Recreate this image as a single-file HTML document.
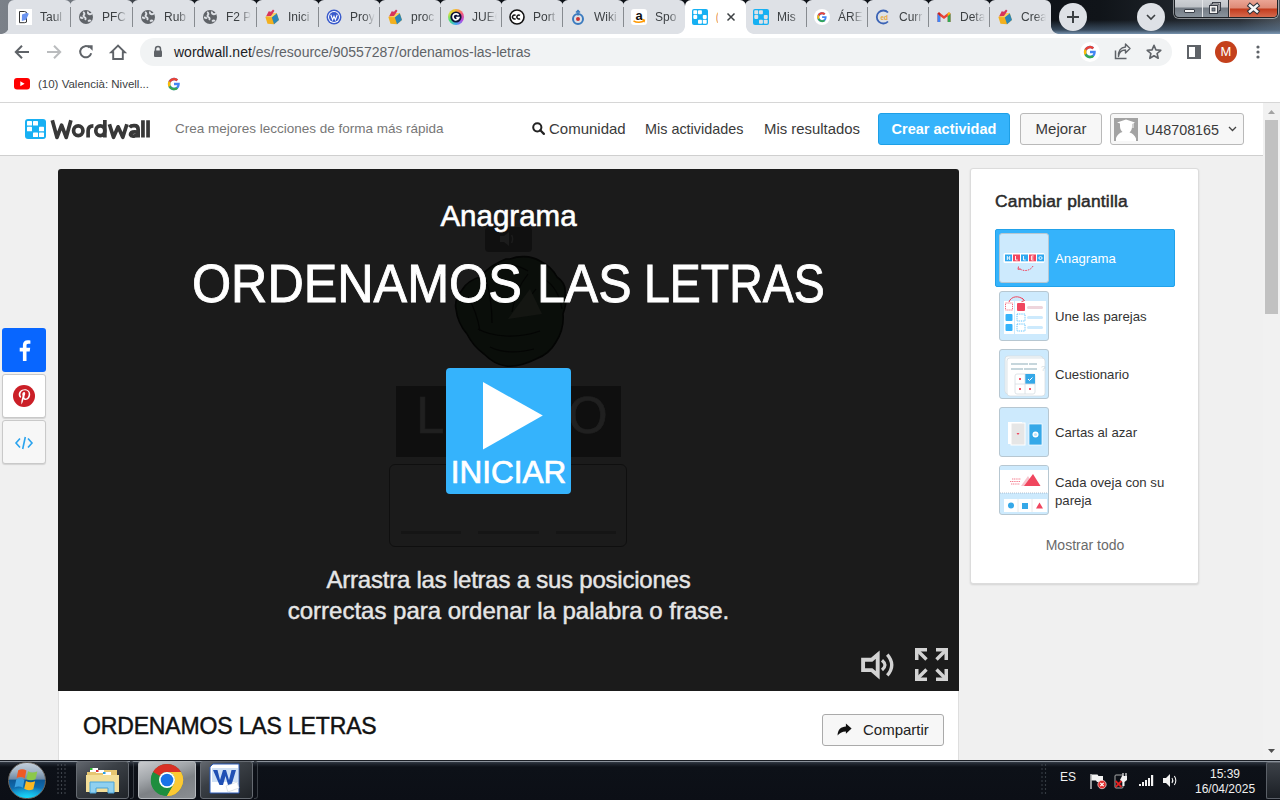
<!DOCTYPE html>
<html><head><meta charset="utf-8">
<style>
*{margin:0;padding:0;box-sizing:border-box}
html,body{width:1280px;height:800px;overflow:hidden;background:#f0f0f0;font-family:"Liberation Sans",sans-serif}
.a{position:absolute}
svg{position:absolute;overflow:visible}
.tab{position:absolute;top:0;height:34px;background:#dee1e6;border-radius:6px 6px 0 0}
.sep{position:absolute;top:7px;width:1px;height:20px;background:#878b90}
.ttl{position:absolute;top:9px;font-size:12px;line-height:16px;color:#3c4043;white-space:nowrap;overflow:hidden;width:25px;-webkit-mask-image:linear-gradient(90deg,#000 55%,transparent 100%)}
.fav{position:absolute;top:9px;width:16px;height:16px}
.nav{position:absolute;top:122px;font-size:14.6px;line-height:15px;color:#3a3a3a;white-space:nowrap}
.thumb{position:absolute;left:999px;width:50px;height:50px;background:#cdeafd;border:1px solid #b7c7d1;border-radius:3px;overflow:hidden}
.tlabel{position:absolute;left:1055px;font-size:13.2px;line-height:18px;color:#333}
.sh{position:absolute;left:2px;width:44px;height:44px;border-radius:3px}
</style></head><body>
<div class="a" style="left:0;top:0;width:1280px;height:34px;background:linear-gradient(90deg,#7b8189 0px,#70767e 70px,#40454c 132px,#15191f 194px,#0d1117 260px,#0d1117 1000px,#101419 1100px,#2a3037 1240px,#4a525b 1280px)"></div>
<div class="a" style="left:1050px;top:0;width:230px;height:34px;background:linear-gradient(180deg,rgba(0,0,0,0) 0px,rgba(0,0,0,0) 20px,rgba(90,120,150,.55) 30px,rgba(130,160,190,.9) 34px)"></div>
<div class="a" style="left:0.5px;top:26px;width:8px;height:8px;background:#dee1e6;-webkit-mask-image:radial-gradient(circle at 0 0,transparent 7.5px,#000 8.2px)"></div>
<div class="a" style="left:1050.50px;top:26px;width:8px;height:8px;background:#dee1e6;-webkit-mask-image:radial-gradient(circle at 100% 0,transparent 7.5px,#000 8.2px)"></div>
<div class="tab" style="left:8.00px;width:63.00px"></div>
<div class="tab" style="left:70.00px;width:63.00px"></div>
<div class="tab" style="left:132.00px;width:63.00px"></div>
<div class="tab" style="left:194.00px;width:63.00px"></div>
<div class="tab" style="left:256.00px;width:63.00px"></div>
<div class="tab" style="left:318.00px;width:62.00px"></div>
<div class="tab" style="left:379.00px;width:62.00px"></div>
<div class="tab" style="left:440.00px;width:62.00px"></div>
<div class="tab" style="left:501.00px;width:62.00px"></div>
<div class="tab" style="left:562.00px;width:62.00px"></div>
<div class="tab" style="left:623.00px;width:62.00px"></div>
<div class="tab" style="left:745.00px;width:62.00px"></div>
<div class="tab" style="left:806.00px;width:62.00px"></div>
<div class="tab" style="left:867.00px;width:62.00px"></div>
<div class="tab" style="left:928.00px;width:62.00px"></div>
<div class="tab" style="left:989.00px;width:62.00px"></div>
<div class="a" style="left:676.50px;top:26px;width:8px;height:8px;background:#fff;-webkit-mask-image:radial-gradient(circle at 0 0,transparent 7.5px,#000 8.2px)"></div>
<div class="a" style="left:745.50px;top:26px;width:8px;height:8px;background:#fff;-webkit-mask-image:radial-gradient(circle at 100% 0,transparent 7.5px,#000 8.2px)"></div>
<div class="tab" style="left:684.50px;width:61.00px;background:#fff"></div>
<div class="sep" style="left:70.00px"></div>
<div class="sep" style="left:132.00px"></div>
<div class="sep" style="left:194.00px"></div>
<div class="sep" style="left:256.00px"></div>
<div class="sep" style="left:318.00px"></div>
<div class="sep" style="left:379.00px"></div>
<div class="sep" style="left:440.00px"></div>
<div class="sep" style="left:501.00px"></div>
<div class="sep" style="left:562.00px"></div>
<div class="sep" style="left:623.00px"></div>
<div class="sep" style="left:806.00px"></div>
<div class="sep" style="left:867.00px"></div>
<div class="sep" style="left:928.00px"></div>
<div class="sep" style="left:989.00px"></div>
<div class="a" style="left:448.0px;top:9px;width:16px;height:16px;border-radius:8px;background:conic-gradient(#f7b731,#f5577c,#b44ce0,#3fa9f5,#48e07a,#d8e040,#f7b731)"></div>
<svg class="fav" style="left:16.0px;top:9px" width="16" height="16" viewBox="0 0 16 16"><rect x="0" y="0" width="16" height="16" fill="#fff"/><path d="M3.5 2.5h5l2 .8v9.8l-2 .6h-5z" fill="none" stroke="#333" stroke-width="1"/><path d="M6 5.5l5-1.8 1.8 1-2.7 6-4.3 1.2z" fill="#6b94f0"/></svg>
<svg class="fav" style="left:78.0px;top:9px" width="16" height="16" viewBox="0 0 16 16"><circle cx="8" cy="8" r="7" fill="#5f6368"/><path d="M5 3.2c1.5.6 1.8 1.8.9 2.8-.9 1-.2 2 .9 2.4 1 .4 1 1.6.3 2.6M2 8.6c1.3-.2 2.3.3 2.7 1.3M10.3 2.7c-.8 1-.3 2 .8 2.3 1.3.4 2.6-.2 3.2-.9M13 12c-1-.6-2.1-.4-2.8.6" stroke="#dee1e6" stroke-width="1.9" fill="none"/></svg>
<svg class="fav" style="left:140.0px;top:9px" width="16" height="16" viewBox="0 0 16 16"><circle cx="8" cy="8" r="7" fill="#5f6368"/><path d="M5 3.2c1.5.6 1.8 1.8.9 2.8-.9 1-.2 2 .9 2.4 1 .4 1 1.6.3 2.6M2 8.6c1.3-.2 2.3.3 2.7 1.3M10.3 2.7c-.8 1-.3 2 .8 2.3 1.3.4 2.6-.2 3.2-.9M13 12c-1-.6-2.1-.4-2.8.6" stroke="#dee1e6" stroke-width="1.9" fill="none"/></svg>
<svg class="fav" style="left:202.0px;top:9px" width="16" height="16" viewBox="0 0 16 16"><circle cx="8" cy="8" r="7" fill="#5f6368"/><path d="M5 3.2c1.5.6 1.8 1.8.9 2.8-.9 1-.2 2 .9 2.4 1 .4 1 1.6.3 2.6M2 8.6c1.3-.2 2.3.3 2.7 1.3M10.3 2.7c-.8 1-.3 2 .8 2.3 1.3.4 2.6-.2 3.2-.9M13 12c-1-.6-2.1-.4-2.8.6" stroke="#dee1e6" stroke-width="1.9" fill="none"/></svg>
<svg class="fav" style="left:264.0px;top:9px" width="16" height="16" viewBox="0 0 16 16"><g transform="rotate(-18 8 9)"><path d="M2 6L8 4l6 2v7l-6 2.5L2 13z" fill="#f2b01e"/><path d="M8 8.3l6-2.3v7l-6 2.5z" fill="#2a86b8"/><path d="M2 6l6-2 6 2-6 2.3z" fill="#f5d36a"/><path d="M3 5.5l4-4 2 1.3 2.6-1.6 1 1.6-3 2.6-2 1.4z" fill="#d8345a"/></g></svg>
<svg class="fav" style="left:387.0px;top:9px" width="16" height="16" viewBox="0 0 16 16"><g transform="rotate(-18 8 9)"><path d="M2 6L8 4l6 2v7l-6 2.5L2 13z" fill="#f2b01e"/><path d="M8 8.3l6-2.3v7l-6 2.5z" fill="#2a86b8"/><path d="M2 6l6-2 6 2-6 2.3z" fill="#f5d36a"/><path d="M3 5.5l4-4 2 1.3 2.6-1.6 1 1.6-3 2.6-2 1.4z" fill="#d8345a"/></g></svg>
<svg class="fav" style="left:997.0px;top:9px" width="16" height="16" viewBox="0 0 16 16"><g transform="rotate(-18 8 9)"><path d="M2 6L8 4l6 2v7l-6 2.5L2 13z" fill="#f2b01e"/><path d="M8 8.3l6-2.3v7l-6 2.5z" fill="#2a86b8"/><path d="M2 6l6-2 6 2-6 2.3z" fill="#f5d36a"/><path d="M3 5.5l4-4 2 1.3 2.6-1.6 1 1.6-3 2.6-2 1.4z" fill="#d8345a"/></g></svg>
<svg class="fav" style="left:326.0px;top:9px" width="16" height="16" viewBox="0 0 16 16"><circle cx="8" cy="8" r="7.5" fill="#3a5bcc"/><circle cx="8" cy="8" r="6" fill="#fff"/><circle cx="8" cy="8" r="5" fill="#3a5bcc"/><path d="M4.8 5.8l1.8 5 1.4-3.6 1.4 3.6 1.8-5" stroke="#fff" stroke-width="1.1" fill="none"/></svg>
<svg class="fav" style="left:448.0px;top:9px" width="16" height="16" viewBox="0 0 16 16"><circle cx="8" cy="8" r="5.6" fill="#0d1438"/><path d="M10.6 6.3a3 3 0 1 0 .3 2.3H8.2" stroke="#fff" stroke-width="1.7" fill="none"/></svg>
<svg class="fav" style="left:509.0px;top:9px" width="16" height="16" viewBox="0 0 16 16"><circle cx="8" cy="8" r="7" fill="#fff" stroke="#111" stroke-width="1.6"/><path d="M6.6 6.4a2 2 0 1 0 0 3.2M11 6.4a2 2 0 1 0 0 3.2" stroke="#111" stroke-width="1.5" fill="none"/></svg>
<svg class="fav" style="left:570.0px;top:9px" width="16" height="16" viewBox="0 0 16 16"><circle cx="8" cy="10" r="5" fill="none" stroke="#3b7bbf" stroke-width="2"/><circle cx="8" cy="10" r="2" fill="#c33"/><path d="M8 1.5v5" stroke="#3b7bbf" stroke-width="1.6"/><path d="M6 3.5l2-2 2 2" stroke="#3b7bbf" stroke-width="1.4" fill="none"/></svg>
<svg class="fav" style="left:631.0px;top:9px" width="16" height="16" viewBox="0 0 16 16"><rect x="0" y="0" width="16" height="16" rx="3" fill="#fff"/><text x="8" y="10.5" font-size="13" font-weight="bold" text-anchor="middle" fill="#111" font-family="Liberation Sans">a</text><path d="M2.5 11.8c3 2 8 2 11-.5" stroke="#f90" stroke-width="1.6" fill="none"/><path d="M11.3 10.3l2.2.9-.6 2" stroke="#f90" stroke-width="1.3" fill="none"/></svg>
<svg class="fav" style="left:692.0px;top:9px" width="16" height="16" viewBox="0 0 16 16"><rect x="0" y="0" width="16" height="16" rx="2" fill="#16b0f2"/><g fill="#fff"><rect x="1.3" y="1.3" width="3.9" height="3.9" rx=".8"/><rect x="6" y="1.3" width="3.9" height="3.9" rx=".8"/><rect x="1.3" y="6" width="3.9" height="3.9" rx=".8"/><rect x="10.8" y="6" width="3.9" height="3.9" rx=".8"/><rect x="6" y="10.8" width="3.9" height="3.9" rx=".8"/><rect x="10.8" y="10.8" width="3.9" height="3.9" rx=".8"/></g></svg>
<svg class="fav" style="left:753.0px;top:9px" width="16" height="16" viewBox="0 0 16 16"><rect x="0" y="0" width="16" height="16" rx="2" fill="#16b0f2"/><g fill="#dee1e6"><rect x="1.3" y="1.3" width="3.9" height="3.9" rx=".8"/><rect x="6" y="1.3" width="3.9" height="3.9" rx=".8"/><rect x="1.3" y="6" width="3.9" height="3.9" rx=".8"/><rect x="10.8" y="6" width="3.9" height="3.9" rx=".8"/><rect x="6" y="10.8" width="3.9" height="3.9" rx=".8"/><rect x="10.8" y="10.8" width="3.9" height="3.9" rx=".8"/></g></svg>
<svg class="fav" style="left:814.0px;top:9px" width="16" height="16" viewBox="0 0 16 16"><circle cx="8" cy="8" r="8" fill="#fff"/><path d="M12.6 7.2H8.1v1.9h2.6c-.3 1.3-1.3 2-2.6 2a2.9 2.9 0 1 1 1.9-5.1l1.4-1.4A4.9 4.9 0 1 0 8.1 13c2.7 0 4.7-2 4.5-5.8z" fill="#4285f4"/><path d="M3.8 5.8l1.6 1.2A2.9 2.9 0 0 1 10 5.9l1.4-1.4a4.9 4.9 0 0 0-7.6 1.3z" fill="#ea4335"/><path d="M3.7 10.3A4.9 4.9 0 0 0 11.3 12l-1.5-1.2A2.9 2.9 0 0 1 5.4 9.2z" fill="#34a853"/><path d="M3.2 8c0 .8.2 1.6.5 2.3l1.7-1.1a2.9 2.9 0 0 1 0-2.2L3.8 5.8A4.9 4.9 0 0 0 3.2 8z" fill="#fbbc05"/></svg>
<svg class="fav" style="left:875.0px;top:9px" width="16" height="16" viewBox="0 0 16 16"><path d="M13 3.5A6.5 6.5 0 1 0 13 12.5" stroke="#3b63b5" stroke-width="1.8" fill="none"/><text x="9.3" y="10.6" font-size="6.5" font-weight="bold" text-anchor="middle" fill="#e9a83a" font-family="Liberation Sans">ed</text></svg>
<svg class="fav" style="left:936.0px;top:9px" width="16" height="16" viewBox="0 0 16 16"><path d="M1.5 4.5v8.5h2.8V7.2L8 10l3.7-2.8V13h2.8V4.5L13 3.3 8 7 3 3.3z" fill="#ea4335"/><path d="M1.5 4.5v8.5h2.8V7.2z" fill="#4285f4"/><path d="M11.7 7.2V13h2.8V4.5z" fill="#34a853"/><path d="M14.5 4.5L13 3.3l-1.3 1v2.9z" fill="#fbbc05"/><path d="M1.5 4.5L3 3.3l1.3 1v2.9z" fill="#c5221f"/></svg>
<div class="ttl" style="left:40.0px">Taul</div>
<div class="ttl" style="left:102.0px">PFCI</div>
<div class="ttl" style="left:164.0px">Rub</div>
<div class="ttl" style="left:226.0px">F2 P</div>
<div class="ttl" style="left:288.0px">Inici</div>
<div class="ttl" style="left:350.0px">Proy</div>
<div class="ttl" style="left:411.0px">proc</div>
<div class="ttl" style="left:472.0px">JUEG</div>
<div class="ttl" style="left:533.0px">Port</div>
<div class="ttl" style="left:594.0px">Wiki</div>
<div class="ttl" style="left:655.0px">Spo</div>
<div class="ttl" style="left:777.0px">Mis</div>
<div class="ttl" style="left:838.0px">ÁRE</div>
<div class="ttl" style="left:899.0px">Curr</div>
<div class="ttl" style="left:960.0px">Deta</div>
<div class="ttl" style="left:1021.0px">Crea</div>
<div class="a" style="left:715.5px;top:11px;font-size:12px;line-height:12px;color:#e8a060;width:2px;overflow:hidden">(</div>
<svg style="left:725.5px;top:12px" width="10" height="10" viewBox="0 0 10 10"><path d="M1.5 1.5l7 7M8.5 1.5l-7 7" stroke="#3c4043" stroke-width="1.5"/></svg>
<div class="a" style="left:1059px;top:3px;width:28px;height:28px;border-radius:14px;background:#dee1e6"></div>
<svg style="left:1067px;top:11px" width="12" height="12" viewBox="0 0 12 12"><path d="M6 0v12M0 6h12" stroke="#3c4043" stroke-width="2"/></svg>
<div class="a" style="left:1137px;top:3px;width:28px;height:28px;border-radius:14px;background:#dee1e6"></div>
<svg style="left:1146px;top:14px" width="10" height="6" viewBox="0 0 10 6"><path d="M1 1l4 4 4-4" stroke="#3c4043" stroke-width="1.6" fill="none"/></svg>
<div class="a" style="left:1173px;top:-1px;width:106px;height:20px;border:1px solid #e6e8ea;border-top:none;border-radius:0 0 6px 6px;opacity:.55"></div>
<div class="a" style="left:1174px;top:-1px;width:104px;height:19px;border:1px solid #1e2227;border-top:none;border-radius:0 0 5px 5px;background:linear-gradient(180deg,#cfd2d6 0px,#bfc3c8 8px,#737b84 9px,#8a939c 18px)"></div>
<div class="a" style="left:1229px;top:0;width:48px;height:17px;border-radius:0 0 4px 0;background:linear-gradient(180deg,#eaa595 0px,#de8a76 8px,#c23b1d 9px,#d56a4e 17px)"></div>
<div class="a" style="left:1202px;top:0;width:1px;height:17px;background:#e3e5e8"></div>
<div class="a" style="left:1228px;top:0;width:1px;height:17px;background:#2a2e33"></div>
<div class="a" style="left:1229px;top:0;width:1px;height:17px;background:#e8b0a0"></div>
<div class="a" style="left:1184px;top:9px;width:11px;height:4px;background:#f4f4f4;border:1px solid #3a3f48;border-radius:1px"></div>
<svg style="left:1209px;top:2px" width="12" height="12" viewBox="0 0 12 12"><rect x="3.5" y=".5" width="8" height="8" fill="#f2f2f2" stroke="#3a3f48"/><rect x="2" y="2" width="8" height="8" fill="#f2f2f2" stroke="#3a3f48"/><rect x=".5" y="3.5" width="8" height="8" fill="#f2f2f2" stroke="#3a3f48"/><rect x="3" y="6" width="3" height="3" fill="#7a8591" stroke="#3a3f48" stroke-width=".8"/></svg>
<svg style="left:1247px;top:3px" width="13" height="11" viewBox="0 0 13 11"><path d="M3 2.6l7 5.8M10 2.6l-7 5.8" stroke="#30343c" stroke-width="4.6" stroke-linecap="square"/><path d="M3 2.6l7 5.8M10 2.6l-7 5.8" stroke="#f7f7f7" stroke-width="2.6" stroke-linecap="square"/></svg>
<div class="a" style="left:0;top:34px;width:1280px;height:68px;background:#fff"></div>
<div class="a" style="left:0;top:102px;width:1280px;height:1px;background:#d6d6d6"></div>
<!-- back -->
<svg style="left:14px;top:44px" width="16" height="16" viewBox="0 0 16 16"><path d="M15 8H2.2M8 1.8L1.8 8 8 14.2" stroke="#5f6368" stroke-width="2" fill="none"/></svg>
<svg style="left:46px;top:44px" width="16" height="16" viewBox="0 0 16 16"><path d="M1 8h12.8M8 1.8L14.2 8 8 14.2" stroke="#babcbe" stroke-width="2" fill="none"/></svg>
<svg style="left:78px;top:44px" width="16" height="16" viewBox="0 0 16 16"><path d="M13.2 9.2A5.6 5.6 0 1 1 11.6 3.6" stroke="#5f6368" stroke-width="2" fill="none"/><path d="M9 1.2h5.6v5.6z" fill="#5f6368"/></svg>
<svg style="left:110px;top:44px" width="16" height="16" viewBox="0 0 16 16"><path d="M8 1.6L1.2 8.2H3.2V15H12.8V8.2H14.8z" stroke="#5f6368" stroke-width="1.9" fill="none" stroke-linejoin="miter"/></svg>
<!-- url bar -->
<div class="a" style="left:140px;top:38px;width:1032px;height:28px;border-radius:14px;background:#f1f3f4"></div>
<svg style="left:153px;top:45px" width="10" height="13" viewBox="0 0 10 13"><path d="M2.5 6V4a2.5 2.5 0 0 1 5 0v2" stroke="#5f6368" stroke-width="1.5" fill="none"/><rect x="1" y="5.5" width="8" height="6.5" rx="1" fill="#5f6368"/></svg>
<div class="a" style="left:174px;top:45px;font-size:14px;line-height:14px;color:#5f6368;white-space:nowrap"><span style="color:#202124">wordwall.net</span>/es/resource/90557287/ordenamos-las-letras</div>
<!-- G in omnibox -->
<div class="a" style="left:1080px;top:42px;width:20px;height:20px;border-radius:10px;background:#fff"></div>
<svg style="left:1083px;top:45px" width="14" height="14" viewBox="0 0 16 16"><path d="M14.6 6.7H8v2.7h3.8c-.4 1.8-1.9 2.8-3.8 2.8A4.2 4.2 0 1 1 10.7 4.8l2-2A7 7 0 1 0 8 15c3.9 0 6.9-2.8 6.6-8.3z" fill="#4285f4"/><path d="M1.8 4.6l2.3 1.7A4.2 4.2 0 0 1 10.7 4.8l2-2A7 7 0 0 0 1.8 4.6z" fill="#ea4335"/><path d="M1.7 11.3A7 7 0 0 0 12.7 13.4L10.5 11.6A4.2 4.2 0 0 1 4.1 9.6z" fill="#34a853"/><path d="M1 8c0 1.2.3 2.3.8 3.3l2.3-1.7a4.2 4.2 0 0 1 0-3.3L1.8 4.6A7 7 0 0 0 1 8z" fill="#fbbc05"/></svg>
<!-- share -->
<svg style="left:1114px;top:44px" width="17" height="16" viewBox="0 0 17 16"><path d="M1.5 6.5v8h11" stroke="#5f6368" stroke-width="1.5" fill="none"/><path d="M4.5 12.5c.5-4 3-6.5 7-6.5V9l4.5-4.5L11.5 0v3c-5 .3-7.5 4-7 9.5z" stroke="#5f6368" stroke-width="1.4" fill="none" stroke-linejoin="round"/></svg>
<!-- star -->
<svg style="left:1146px;top:44px" width="16" height="16" viewBox="0 0 16 16"><path d="M8 1.3l1.9 4.6 4.9.4-3.7 3.2 1.1 4.8L8 11.7l-4.2 2.6 1.1-4.8L1.2 6.3l4.9-.4z" stroke="#5f6368" stroke-width="1.6" fill="none" stroke-linejoin="round"/></svg>
<!-- side panel -->
<svg style="left:1187px;top:45px" width="14" height="14" viewBox="0 0 14 14"><rect x="1" y="1" width="12" height="12" fill="none" stroke="#5f6368" stroke-width="2"/><rect x="8" y="1" width="5" height="12" fill="#5f6368"/></svg>
<!-- avatar -->
<div class="a" style="left:1215px;top:41px;width:22px;height:22px;border-radius:11px;background:#c4401c;color:#fff;font-size:13px;line-height:22px;text-align:center">M</div>
<!-- menu -->
<svg style="left:1255px;top:45px" width="6" height="14" viewBox="0 0 6 14"><circle cx="3" cy="2" r="1.6" fill="#5f6368"/><circle cx="3" cy="7" r="1.6" fill="#5f6368"/><circle cx="3" cy="12" r="1.6" fill="#5f6368"/></svg>
<!-- bookmarks -->
<svg style="left:14px;top:78px" width="16" height="12" viewBox="0 0 16 12"><rect x="0" y="0" width="16" height="11.5" rx="3" fill="#f00"/><path d="M6.3 3.3v5l4.3-2.5z" fill="#fff"/></svg>
<div class="a" style="left:38px;top:78px;font-size:11.5px;line-height:12px;color:#3c4043;white-space:nowrap">(10) Valencià: Nivell...</div>
<svg style="left:167px;top:77px" width="14" height="14" viewBox="0 0 16 16"><path d="M14.6 6.7H8v2.7h3.8c-.4 1.8-1.9 2.8-3.8 2.8A4.2 4.2 0 1 1 10.7 4.8l2-2A7 7 0 1 0 8 15c3.9 0 6.9-2.8 6.6-8.3z" fill="#4285f4"/><path d="M1.8 4.6l2.3 1.7A4.2 4.2 0 0 1 10.7 4.8l2-2A7 7 0 0 0 1.8 4.6z" fill="#ea4335"/><path d="M1.7 11.3A7 7 0 0 0 12.7 13.4L10.5 11.6A4.2 4.2 0 0 1 4.1 9.6z" fill="#34a853"/><path d="M1 8c0 1.2.3 2.3.8 3.3l2.3-1.7a4.2 4.2 0 0 1 0-3.3L1.8 4.6A7 7 0 0 0 1 8z" fill="#fbbc05"/></svg>
<div class="a" style="left:0;top:103px;width:1263px;height:52px;background:#fff"></div>
<div class="a" style="left:0;top:155px;width:1263px;height:1px;background:#cfcfcf"></div>
<!-- logo -->
<svg style="left:25px;top:119px" width="21" height="20" viewBox="0 0 21 20"><rect x="0" y="0" width="21" height="20" rx="3" fill="#18b0f3"/><g fill="#fff"><rect x="2" y="2" width="5" height="4.6" rx=".6"/><rect x="8" y="2" width="5" height="4.6" rx=".6"/><rect x="2" y="7.7" width="5" height="4.6" rx=".6"/><rect x="14" y="7.7" width="5" height="4.6" rx=".6"/><rect x="8" y="13.4" width="5" height="4.6" rx=".6"/><rect x="14" y="13.4" width="5" height="4.6" rx=".6"/></g></svg>
<svg style="left:50px;top:120px" width="101" height="18" viewBox="0 0 101 18"><g stroke="#383838" stroke-width="3.7" fill="none" stroke-linejoin="round"><path d="M2.3 0.2L7 17.4L11.6 5.2L16.2 17.4L20.9 0.2"/><ellipse cx="28.25" cy="10.75" rx="4.7" ry="4.9"/><path d="M38.1 17.5V11C38.1 7.3 40.2 5.9 43.4 5.9"/><ellipse cx="50.3" cy="10.75" rx="4.5" ry="4.9"/><path d="M54.85 0V17.5"/><path d="M59.4 4.3L63.5 17.3L68.1 6.8L72.8 17.3L76.9 4.3"/><path d="M79.6 7.3C81 5.4 83 5.7 84.6 5.7C87 5.7 88.15 7 88.15 9.5V17.5"/><path d="M88.15 12.7C86.5 11.7 84.5 11.6 82.6 12.1C80.8 12.6 80.3 14 80.6 15C81 16.2 82.3 16.3 84 16.1C86.2 15.8 87.6 14.8 88.15 13.8"/><path d="M92.95 0.3V17.5M98.05 0.3V17.5"/></g></svg>
<div class="a" style="left:175px;top:122px;font-size:13.5px;line-height:14px;color:#777;white-space:nowrap">Crea mejores lecciones de forma más rápida</div>
<!-- nav -->
<svg style="left:532px;top:122px" width="13" height="13" viewBox="0 0 13 13"><circle cx="5.3" cy="5.3" r="4.1" stroke="#222" stroke-width="2" fill="none"/><path d="M8.3 8.3l3.6 3.6" stroke="#222" stroke-width="2.2" stroke-linecap="round"/></svg>
<div class="nav" style="left:549px;font-size:15px;top:121px">Comunidad</div>
<div class="nav" style="left:645px;font-size:14.4px">Mis actividades</div>
<div class="nav" style="left:764px;font-size:14.9px">Mis resultados</div>
<div class="a" style="left:878px;top:113px;width:132px;height:32px;border-radius:3px;background:#35b3fb;border:1px solid #1d9fe6;color:#fff;font-weight:bold;font-size:14.5px;line-height:30px;text-align:center;white-space:nowrap">Crear actividad</div>
<div class="a" style="left:1020px;top:113px;width:82px;height:32px;border-radius:3px;background:#f7f7f7;border:1px solid #b9b9b9;color:#3a3a3a;font-size:15px;line-height:30px;text-align:center">Mejorar</div>
<div class="a" style="left:1110px;top:113px;width:134px;height:32px;border-radius:3px;background:#f7f7f7;border:1px solid #b9b9b9"></div>
<svg style="left:1114px;top:118px" width="24" height="23" viewBox="0 0 24 23"><rect width="24" height="23" fill="#a3a3a3"/><path d="M3 4.5L12 1.5l9 3-3 1.5v3c0 2.5-1.2 4.5-2.5 5.5 3 .8 5.5 3 6.5 6v2.5H2V20c1-3 3.5-5.2 6.5-6C7.2 13 6 11 6 8.5v-3z" fill="#fff"/><path d="M19 5v5" stroke="#fff" stroke-width="1"/></svg>
<div class="a" style="left:1145px;top:123px;font-size:14.3px;line-height:14px;color:#3a3a3a;white-space:nowrap">U48708165</div>
<svg style="left:1228px;top:126px" width="9" height="6" viewBox="0 0 9 6"><path d="M1 1l3.5 3.5L8 1" stroke="#444" stroke-width="1.3" fill="none"/></svg>
<!-- scrollbar -->
<div class="a" style="left:1263px;top:103px;width:17px;height:657px;background:#f1f1f1"></div>
<svg style="left:1268px;top:110px" width="7" height="4" viewBox="0 0 7 4"><path d="M0 4L3.5 0 7 4z" fill="#a3a3a3"/></svg>
<div class="a" style="left:1265px;top:120px;width:13px;height:194px;background:#c1c1c1"></div>
<svg style="left:1268px;top:749px" width="7" height="4" viewBox="0 0 7 4"><path d="M0 0L3.5 4 7 0z" fill="#505050"/></svg>
<!-- share buttons -->
<div class="sh" style="top:328px;background:#1877f2;background:#0866ff"></div>
<svg style="left:15px;top:339px" width="18" height="22" viewBox="0 0 18 22"><path d="M11.5 22V12.5h3.2l.5-3.7h-3.7V6.5c0-1.1.3-1.8 1.9-1.8h2V1.4C15 1.3 13.9 1.2 12.6 1.2 9.8 1.2 7.9 2.9 7.9 6v2.8H4.7v3.7h3.2V22z" fill="#fff"/></svg>
<div class="sh" style="top:374px;background:#fff;border:1px solid #c9c9c9;box-shadow:0 1px 1px rgba(0,0,0,.12)"></div>
<svg style="left:13px;top:385px" width="22" height="22" viewBox="0 0 22 22"><circle cx="11" cy="11" r="11" fill="#cb1f27"/><path d="M8.5 19.5c.6-1 1.2-2.5 1.5-3.6l.5-2c.3.6 1.2 1.1 2.1 1.1 2.8 0 4.6-2.5 4.6-5.7 0-2.6-2.1-5-5.4-5-4 0-6.1 2.9-6.1 5.3 0 1.4.6 2.7 1.8 3.2.2.1.4 0 .4-.2l.2-.8c.1-.2 0-.3-.1-.5-.4-.4-.6-1-.6-1.8 0-2.3 1.7-4.3 4.5-4.3 2.4 0 3.8 1.5 3.8 3.5 0 2.6-1.2 4.8-2.9 4.8-1 0-1.7-.8-1.4-1.8.3-1.1.8-2.4.8-3.2 0-.7-.4-1.4-1.2-1.4-1 0-1.7 1-1.7 2.3 0 .8.3 1.4.3 1.4l-1.1 4.8c-.3 1.4-.1 3.2 0 3.900z" fill="#fff"/></svg>
<div class="sh" style="top:420px;background:#f7f7f7;border:1px solid #c9c9c9;box-shadow:0 1px 1px rgba(0,0,0,.12)"></div>
<svg style="left:15px;top:436px" width="18" height="14" viewBox="0 0 18 14"><path d="M5 2.5L1 7l4 4.5M13 2.5L17 7l-4 4.5M10.3 1L7.7 13" stroke="#2aa3ee" stroke-width="1.6" fill="none"/></svg>
<!-- game -->
<div class="a" style="left:58px;top:169px;width:901px;height:522px;background:#1b1b1b;overflow:hidden;border-radius:3px 3px 0 0">
  <!-- faint background elements -->
  <div class="a" style="left:427px;top:58px;width:47px;height:25px;border-radius:4px;background:#101010"></div>
  <svg style="left:440px;top:61px" width="20" height="18" viewBox="0 0 20 18"><path d="M2 6h4l5-4v14l-5-4H2z" fill="#1c1c1c"/><path d="M13.5 5c1.5 2 1.5 6 0 8" stroke="#1c1c1c" stroke-width="1.5" fill="none"/></svg>
  <svg style="left:0;top:0" width="901" height="300" viewBox="0 0 901 300"><path d="M452 90c8-3 20-4 30 2 8 4 14 10 17 16 6 4 9 10 8 17 2 8 0 14-2 20 1 10-2 20-7 28-5 9-12 14-20 17-10 5-20 8-30 7-9-1-16-6-22-12-7-5-13-12-17-20-6-7-10-15-11-25-2-8 2-14 6-19 4-7 11-11 18-13 7-8 15-14 26-18z" fill="#0a0e0a" stroke="#040504" stroke-width="1.6"/><g stroke="#040504" stroke-width="1.2" fill="none"><path d="M410 128c6 10 10 22 12 34M428 110c4 14 6 30 6 44M470 105c-8 10-14 24-16 38M486 110c10 6 16 18 18 30M420 160c14 8 40 10 62 2M432 178c12 6 28 6 44 2M458 145l20-25M440 96c10-2 20 0 30 6"/></g><path d="M450 150l22-30 12 25z" fill="#141612"/></svg>
  <div class="a" style="left:338px;top:217px;width:225px;height:71px;background:#0f0f0f"></div>
  <div class="a" style="left:358px;top:217px;font-size:51px;line-height:60px;color:#202020;-webkit-text-stroke:0.6px #202020;white-space:nowrap">L</div>
  <div class="a" style="left:510px;top:217px;font-size:51px;line-height:60px;color:#202020;-webkit-text-stroke:0.6px #202020;white-space:nowrap">O</div>
  <div class="a" style="left:331px;top:295px;width:238px;height:83px;border:1.5px solid #0f0f0f;border-radius:6px"></div>
  <div class="a" style="left:343px;top:362px;width:60px;height:3px;background:#151515"></div>
  <div class="a" style="left:420px;top:362px;width:61px;height:3px;background:#151515"></div>
  <div class="a" style="left:498px;top:362px;width:60px;height:3px;background:#151515"></div>
  <!-- titles -->
  <div class="a" style="left:0;top:30px;width:901px;text-align:center;font-size:29.5px;line-height:34px;color:#fff;-webkit-text-stroke:0.6px #fff;white-space:nowrap">Anagrama</div>
  <div class="a" style="left:133.5px;top:85px;font-size:53.5px;line-height:60px;color:#fff;-webkit-text-stroke:0.9px #fff;white-space:nowrap;transform:scaleX(0.94);transform-origin:0 0">ORDENAMOS</div>
  <div class="a" style="left:478.5px;top:85px;font-size:53.5px;line-height:60px;color:#fff;-webkit-text-stroke:0.9px #fff;white-space:nowrap;transform:scaleX(0.935);transform-origin:0 0">LAS</div>
  <div class="a" style="left:585.6px;top:85px;font-size:53.5px;line-height:60px;color:#fff;-webkit-text-stroke:0.9px #fff;white-space:nowrap;transform:scaleX(0.868);transform-origin:0 0">LETRAS</div>
  <!-- play button -->
  <div class="a" style="left:388px;top:199px;width:125px;height:126px;border-radius:4px;background:#35b3fc"></div>
  <svg style="left:388px;top:199px" width="125" height="126" viewBox="0 0 125 126"><path d="M37 14v67.5l59.8-34z" fill="#fff"/></svg>
  <div class="a" style="left:388px;top:286px;width:125px;text-align:center;font-size:31.5px;line-height:34px;color:#fff;-webkit-text-stroke:0.7px #fff;white-space:nowrap">INICIAR</div>
  <!-- instructions -->
  <div class="a" style="left:0;top:395px;width:901px;text-align:center;font-size:24px;line-height:31px;color:#e6e6e6;-webkit-text-stroke:0.45px #e6e6e6;white-space:nowrap"><span style="letter-spacing:-0.23px">Arrastra las letras a sus posiciones</span><br>correctas para ordenar la palabra o frase.</div>
  <!-- speaker -->
  <svg style="left:803px;top:481px" width="34" height="30" viewBox="0 0 34 30"><path d="M2.1 9.7H10.7L16.7 4.6V25.2L10.7 20.1H2.1Z" stroke="#d3d3d3" stroke-width="3.9" fill="none" stroke-linejoin="miter"/><path d="M21 10.2Q27 15.1 21 20" stroke="#d3d3d3" stroke-width="3.2" fill="none"/><path d="M26.3 4.6Q35.2 15 26.3 25.4" stroke="#d3d3d3" stroke-width="3.3" fill="none"/></svg>
  <!-- fullscreen -->
  <svg style="left:857px;top:479px" width="33" height="33" viewBox="0 0 33 33"><g fill="#d3d3d3"><path d="M0 0h12v3.5H3.5V12H0z"/><path d="M33 0H21v3.5h8.5V12H33z"/><path d="M0 33h12v-3.5H3.5V21H0z"/><path d="M33 33H21v-3.5h8.5V21H33z"/></g><g stroke="#d3d3d3" stroke-width="3.4"><path d="M3 3l8.5 8.5M30 3l-8.5 8.5M3 30l8.5-8.5M30 30l-8.5-8.5"/></g></svg>
</div>
<!-- below game white -->
<div class="a" style="left:58px;top:691px;width:901px;height:69px;background:#fff;border-left:1px solid #dedede;border-right:1px solid #dedede"></div>
<div class="a" style="left:83px;top:713px;font-size:23px;line-height:26px;color:#111;-webkit-text-stroke:0.45px #111;letter-spacing:-0.15px;white-space:nowrap">ORDENAMOS LAS LETRAS</div>
<div class="a" style="left:822px;top:714px;width:122px;height:32px;border-radius:3px;background:#f7f7f7;border:1px solid #aaa"></div>
<svg style="left:837px;top:723px" width="15" height="13" viewBox="0 0 15 13"><path d="M14.6 5.6L8.9 0.6V3.4C4.2 3.6 0.6 6.4 0.6 12.6 2.2 10 5 8.4 8.9 8.4V10.8Z" fill="#111"/></svg>
<div class="a" style="left:863px;top:722px;font-size:15px;line-height:16px;color:#222;white-space:nowrap">Compartir</div>
<div class="a" style="left:970px;top:168px;width:229px;height:416px;background:#fff;border:1px solid #dcdcdc;border-radius:3px;box-shadow:0 1px 2px rgba(0,0,0,.12)"></div>
<div class="a" style="left:995px;top:192px;font-size:17.4px;line-height:18px;color:#2b2b2b;-webkit-text-stroke:0.5px #2b2b2b;letter-spacing:0.2px;white-space:nowrap">Cambiar plantilla</div>
<div class="a" style="left:995px;top:229px;width:180px;height:58px;background:#35b3fb;border:1px solid #22a2ea;border-radius:2px"></div>
<div class="thumb" style="top:233px"><svg style="left:-1.2px;top:-1px" width="50" height="50" viewBox="0 0 50 50"><rect x="4.5" y="20" width="41" height="10" rx="1.5" fill="#fff"/><g fill="#2fa8f0"><rect x="6" y="21.5" width="7" height="6.8"/><rect x="22" y="21.5" width="7" height="6.8"/><rect x="38" y="21.5" width="7" height="6.8"/></g><g fill="#f2455f"><rect x="14" y="21.5" width="7" height="6.8"/><rect x="30" y="21.5" width="7" height="6.8"/></g><g stroke="#fff" stroke-width=".9" fill="none"><path d="M8.3 23v4M10.7 23v4M8.3 25h2.4M16.5 23v4h2.2M24.5 23v4h2.2M32.4 23v4h2.2M32.4 23h2.2M32.4 25h2"/><ellipse cx="41.5" cy="25" rx="1.6" ry="1.4"/></g><path d="M34 33c-2 4-8 6.5-14 2.5" stroke="#f2455f" stroke-width="1" fill="none" stroke-dasharray="1.6 1"/><path d="M19.5 33.5l-.5 2.8 2.6-.3" stroke="#f2455f" stroke-width="1" fill="none"/></svg></div>
<div class="tlabel" style="left:1055px;top:250px;color:#fff;font-size:13.2px">Anagrama</div>
<div class="thumb" style="top:291px"><svg style="left:0;top:0" width="50" height="50" viewBox="0 0 50 50"><rect x="4" y="9" width="10" height="33" fill="#fff"/><rect x="15" y="9" width="31" height="33" fill="#fff"/><rect x="5.5" y="11" width="7" height="7" fill="none" stroke="#f0465e" stroke-width=".8" stroke-dasharray="1.2 .8"/><rect x="5.5" y="22" width="7" height="7" rx="1" fill="#35b3fb"/><rect x="5.5" y="32" width="7" height="7" rx="1" fill="#35b3fb"/><rect x="17" y="11" width="8" height="8" rx="1" fill="#f0465e"/><rect x="17" y="22" width="8" height="7" fill="none" stroke="#35b3fb" stroke-width=".8" stroke-dasharray="1 .8"/><rect x="17" y="32" width="8" height="7" fill="none" stroke="#35b3fb" stroke-width=".8" stroke-dasharray="1 .8"/><rect x="27" y="14" width="16" height="3" rx="1.5" fill="#edd5dc"/><rect x="27" y="24" width="16" height="3" rx="1.5" fill="#cdeafd"/><rect x="27" y="34" width="16" height="3" rx="1.5" fill="#cdeafd"/><path d="M9 10c2-6 10-7 15-2" stroke="#f0465e" stroke-width="1" fill="none"/><path d="M22 6l2.5 2.5-3 1.2" stroke="#f0465e" stroke-width="1" fill="none"/></svg></div>
<div class="tlabel" style="top:308px">Une las parejas</div>
<div class="thumb" style="top:349px"><svg style="left:0;top:0" width="50" height="50" viewBox="0 0 50 50"><rect x="5" y="6" width="38" height="38" rx="3" fill="#f4f8fa" stroke="#d5dde2" stroke-width=".8"/><rect x="7" y="8" width="38" height="38" rx="3" fill="#fff" stroke="#d5dde2" stroke-width=".8"/><rect x="11" y="13" width="17" height="2" fill="#c6d6dc"/><rect x="29" y="13" width="8" height="2" fill="#c6d6dc"/><rect x="11" y="18" width="12" height="2" fill="#c6d6dc"/><rect x="24" y="18" width="13" height="2" fill="#c6d6dc"/><text x="41" y="21" font-size="8" fill="#c6d6dc" font-family="Liberation Sans">?</text><rect x="15" y="24" width="20" height="20" rx="2" fill="#fff" stroke="#d5dde2" stroke-width=".8"/><rect x="25" y="24" width="10" height="10" fill="#35a8e8"/><path d="M15 34h20M25 24v20" stroke="#d5dde2" stroke-width=".8"/><path d="M28 29l1.5 1.5 3-3" stroke="#fff" stroke-width="1" fill="none"/><g stroke="#f0465e" stroke-width=".9"><path d="M19 28l2 2M21 28l-2 2M19 38l2 2M21 38l-2 2M29 38l2 2M31 38l-2 2"/></g></svg></div>
<div class="tlabel" style="top:366px">Cuestionario</div>
<div class="thumb" style="top:407px"><svg style="left:0;top:0" width="50" height="50" viewBox="0 0 50 50"><rect x="8" y="14" width="14" height="22" fill="#fff"/><rect x="11" y="15" width="14" height="22" fill="#e6e6e6" stroke="#fff" stroke-width="1"/><path d="M16.5 25h3l-1.5 2z" fill="#f0465e"/><rect x="29" y="16" width="13" height="21" fill="#35a8e8" stroke="#fff" stroke-width=".7"/><circle cx="35.5" cy="26.5" r="3" fill="#fff"/><circle cx="35.5" cy="26.5" r="1.6" fill="#bde4fb"/></svg></div>
<div class="tlabel" style="top:424px">Cartas al azar</div>
<div class="thumb" style="top:465px"><svg style="left:0;top:0" width="50" height="50" viewBox="0 0 50 50"><rect x="0" y="0" width="50" height="4" fill="#cdeafd"/><rect x="0" y="4" width="50" height="23" fill="#fff"/><path d="M0 27h50" stroke="#9ab" stroke-width=".7" stroke-dasharray="1 1"/><g stroke="#f0465e" stroke-width=".7" stroke-dasharray="1.2 .6"><path d="M12 13h9M10 15.5h10M11 18h9"/></g><path d="M21 20l7-10 6 10z" fill="#f7c6cf"/><path d="M24 20l9-12 7.5 12z" fill="#f0465e"/><rect x="4" y="33" width="43" height="13" fill="#fff"/><path d="M18 33v13M32 33v13" stroke="#e5e5e5" stroke-width=".8"/><circle cx="11" cy="39.5" r="3" fill="#35a8e8"/><rect x="22" y="37" width="6" height="6" fill="#35a8e8"/><path d="M36 42.5l3.5-6 3.5 6z" fill="#f0465e"/></svg></div>
<div class="tlabel" style="top:474px">Cada oveja con su<br>pareja</div>
<div class="a" style="left:971px;top:537px;width:228px;text-align:center;font-size:14px;line-height:16px;color:#6a6a6a;white-space:nowrap">Mostrar todo</div>
<div class="a" style="left:0;top:760px;width:1280px;height:40px;background:linear-gradient(180deg,#1b1f26 0px,#1b1f26 1px,#8a919a 1px,#8a919a 2px,#333a44 2px,#1e242d 4px,#0d1118 7px,#0c0f16 100%)"></div>
<!-- start orb -->
<div class="a" style="left:8px;top:762px;width:38px;height:37px;border-radius:19px;background:radial-gradient(ellipse 60% 35% at 50% 100%,#18d8f8 0%,rgba(24,200,240,0) 100%),linear-gradient(180deg,#c4d0dc 0%,#9fb2c4 25%,#6f8aa6 46%,#0d5896 49%,#0f6aae 70%,#1590cf 90%,#14b6e8 100%);border:1px solid #6b6660;box-shadow:0 0 1px #000"></div>
<svg style="left:14px;top:768px" width="27" height="24" viewBox="0 0 24 22"><path d="M3.5 2c2.5-1.3 5-1.3 7.5.3l-1.5 7C7 8 4.5 8 2 9.2z" fill="#ee5a24"/><path d="M12.5 3c2.5 1.5 5 1.5 8.5.2l-1.7 7.2c-3.2 1.2-6 1.1-8.4-.3z" fill="#8cc84a"/><path d="M1.7 10.6c2.5-1.2 5-1.2 7.5.3L7.7 18c-2.5-1.5-5-1.5-7.6-.2z" fill="#3aa0e0"/><path d="M10.6 11.9c2.4 1.4 5.2 1.5 8.4.3L17.3 19.5c-3.2 1.3-6 1.1-8.3-.4z" fill="#fcb823"/></svg>
<!-- grip -->
<svg style="left:57px;top:764px" width="9" height="31" viewBox="0 0 9 31"><g fill="#5a6068"><circle cx="1" cy="1" r=".7"/><circle cx="4.5" cy="1" r=".7"/><circle cx="8" cy="1" r=".7"/><circle cx="1" cy="5" r=".7"/><circle cx="4.5" cy="5" r=".7"/><circle cx="8" cy="5" r=".7"/><circle cx="1" cy="9" r=".7"/><circle cx="4.5" cy="9" r=".7"/><circle cx="8" cy="9" r=".7"/><circle cx="1" cy="13" r=".7"/><circle cx="4.5" cy="13" r=".7"/><circle cx="8" cy="13" r=".7"/><circle cx="1" cy="17" r=".7"/><circle cx="4.5" cy="17" r=".7"/><circle cx="8" cy="17" r=".7"/><circle cx="1" cy="21" r=".7"/><circle cx="4.5" cy="21" r=".7"/><circle cx="8" cy="21" r=".7"/><circle cx="1" cy="25" r=".7"/><circle cx="4.5" cy="25" r=".7"/><circle cx="8" cy="25" r=".7"/><circle cx="1" cy="29" r=".7"/><circle cx="4.5" cy="29" r=".7"/><circle cx="8" cy="29" r=".7"/></g></svg>
<!-- explorer -->
<div class="a" style="left:76px;top:761px;width:53px;height:38px;border-radius:3px;border:1px solid #666b72;background:linear-gradient(150deg,#62676e 0%,#3a3f45 40%,#202429 100%)"></div>
<div class="a" style="left:130px;top:761px;width:4px;height:38px;border:1px solid #3a3f46;border-left:none;border-radius:0 3px 3px 0"></div>
<svg style="left:86px;top:766px" width="34" height="30" viewBox="0 0 34 30"><path d="M1 6h10l2-2h18v22H1z" fill="#e6c671"/><rect x="4" y="2" width="8" height="4" fill="#fff"/><rect x="4" y="2" width="2.5" height="2" fill="#2eb82e"/><rect x="10" y="4" width="8" height="3" fill="#fff"/><rect x="10" y="4" width="2.5" height="2" fill="#d33"/><rect x="17" y="6" width="8" height="3" fill="#fff"/><rect x="17" y="6" width="2.5" height="2" fill="#29a0e8"/><path d="M0 9h33v17H0z" fill="#f3de98"/><path d="M4 16h24v11h-6v-5H10v5H4z" fill="#8fd0f0" stroke="#4aa4d8" stroke-width="1"/></svg>
<!-- chrome -->
<div class="a" style="left:138px;top:761px;width:58px;height:38px;border-radius:3px;border:1px solid #b5b9bd;background:linear-gradient(160deg,#c9cbce 0%,#a2a6aa 35%,#7d8185 60%,#8a8e92 100%)"></div>
<svg style="left:151px;top:764px" width="32" height="32" viewBox="0 0 32 32"><circle cx="16" cy="16" r="16" fill="#1e8e3e"/><path d="M16 0A16 16 0 0 1 29.9 8H16A8 8 0 0 0 9.1 12L2.1 8A16 16 0 0 1 16 0z" fill="#d93025"/><path d="M29.9 8A16 16 0 0 1 16 32l7-12A8 8 0 0 0 23 12z" fill="#fbbc04"/><path d="M2.1 8 9.1 20A8 8 0 0 0 16 24L9.5 31A16 16 0 0 1 2.1 8z" fill="#1e8e3e"/><path d="M16 8h13.9A16 16 0 0 1 16 32L23 20A8 8 0 0 0 16 8z" fill="#fcc934"/><circle cx="16" cy="16" r="8" fill="#fff"/><circle cx="16" cy="16" r="6.3" fill="#1a73e8"/></svg>
<!-- word -->
<div class="a" style="left:200px;top:761px;width:53px;height:38px;border-radius:3px;border:1px solid #666b72;background:linear-gradient(150deg,#62676e 0%,#3a3f45 40%,#202429 100%)"></div>
<div class="a" style="left:254px;top:761px;width:4px;height:38px;border:1px solid #3a3f46;border-left:none;border-radius:0 3px 3px 0"></div>
<svg style="left:210px;top:764px" width="30" height="29" viewBox="0 0 30 29"><path d="M0 3l3-3h26v29H0z" fill="#fff" stroke="#2b5bb8" stroke-width="1"/><path d="M2 4h26v14H2z" fill="#cfe0f5"/><path d="M3 6h4.5l2.5 10 3-10h3l3 10 2.5-10H26l-4.5 15h-3.5l-2.5-9-2.5 9H9.5z" fill="#1f4fb4"/><path d="M16 22l11-4 2 6-11 4z" fill="#fff" stroke="#c9d3de" stroke-width=".6"/></svg>
<!-- tray -->
<svg style="left:1041px;top:764px" width="9" height="31" viewBox="0 0 9 31"><g fill="#4d535b"><circle cx="1" cy="1" r=".7"/><circle cx="4.5" cy="1" r=".7"/><circle cx="1" cy="5" r=".7"/><circle cx="4.5" cy="5" r=".7"/><circle cx="1" cy="9" r=".7"/><circle cx="4.5" cy="9" r=".7"/><circle cx="1" cy="13" r=".7"/><circle cx="4.5" cy="13" r=".7"/><circle cx="1" cy="17" r=".7"/><circle cx="4.5" cy="17" r=".7"/><circle cx="1" cy="21" r=".7"/><circle cx="4.5" cy="21" r=".7"/><circle cx="1" cy="25" r=".7"/><circle cx="4.5" cy="25" r=".7"/><circle cx="1" cy="29" r=".7"/><circle cx="4.5" cy="29" r=".7"/></g></svg>
<div class="a" style="left:1060px;top:771px;font-size:12px;line-height:13px;color:#f0f0f0;white-space:nowrap">ES</div>
<svg style="left:1090px;top:773px" width="17" height="16" viewBox="0 0 17 16"><path d="M1 1v15" stroke="#eee" stroke-width="1.2"/><path d="M1.5 1.5h6l1 1.5h4.5v6h-6l-1-1.5H1.5z" fill="#f2f2f2"/><circle cx="12" cy="11.5" r="4.2" fill="#e03030" stroke="#fff" stroke-width=".6"/><path d="M10.3 9.8l3.4 3.4M13.7 9.8l-3.4 3.4" stroke="#fff" stroke-width="1.2"/></svg>
<svg style="left:1114px;top:772px" width="15" height="17" viewBox="0 0 15 17"><rect x="1" y="3" width="8" height="13" rx="1" fill="none" stroke="#aaa" stroke-width="1"/><path d="M8 4h5v4l-2.5 2v4h-2v-4L6 8z" fill="#f2f2f2"/><path d="M9 1v3M12 1v3" stroke="#f2f2f2" stroke-width="1.2"/><path d="M1.5 9l6 6M7.5 9l-6 6" stroke="#e02020" stroke-width="1.8"/></svg>
<svg style="left:1139px;top:775px" width="15" height="11" viewBox="0 0 15 11"><g fill="#f2f2f2"><rect x="0" y="9" width="2" height="2"/><rect x="3" y="7" width="2" height="4"/><rect x="6" y="5" width="2" height="6"/><rect x="9" y="3" width="2" height="8"/><rect x="12" y="0" width="2.2" height="11"/></g></svg>
<svg style="left:1163px;top:773px" width="14" height="15" viewBox="0 0 14 15"><path d="M0 5h3l4-4v13l-4-4H0z" fill="#f2f2f2"/><path d="M9 5c1 1.5 1 3.5 0 5M11.3 3c2 2.5 2 6.5 0 9" stroke="#f2f2f2" stroke-width="1.1" fill="none"/></svg>
<div class="a" style="left:1195px;top:767px;width:60px;text-align:center;font-size:12px;line-height:15px;color:#f0f0f0;white-space:nowrap">15:39<br>16/04/2025</div>
<div class="a" style="left:1266px;top:762px;width:14px;height:37px;border:1px solid #5b6068;border-right:none;border-radius:2px 0 0 2px;background:linear-gradient(180deg,#3c4148,#1b1f25)"></div>
</body></html>
